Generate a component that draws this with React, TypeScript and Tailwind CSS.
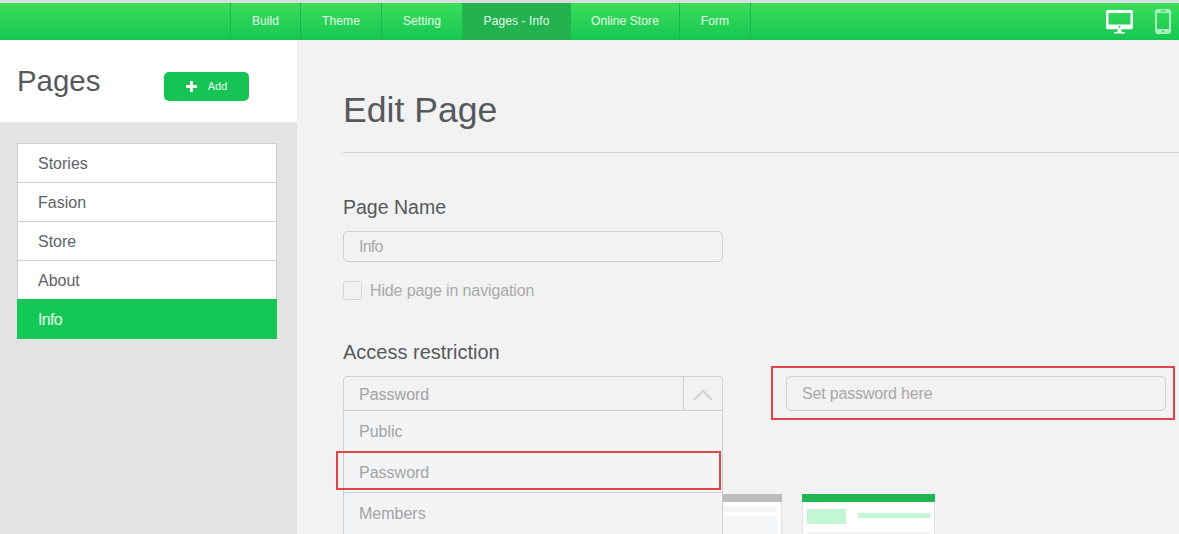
const navItems = [
  { label: "Build", w: "w-[70px]" },
  { label: "Theme", w: "w-[81px]" },
  { label: "Setting", w: "w-[81px]" },
  { label: "Pages - Info", w: "w-[108px]", active: true },
  { label: "Online Store", w: "w-[109px]" },
  { label: "Form", w: "w-[71px]" },
];

const pages = ["Stories", "Fasion", "Store"];

function Desktop() {
  return (
    <svg width="27" height="24" viewBox="0 0 28 25">
      <path fillRule="evenodd" fill="#fff" d="M1.5 0h25A1.5 1.5 0 0 1 28 1.5v17a1.5 1.5 0 0 1-1.5 1.5h-25A1.5 1.5 0 0 1 0 18.5v-17A1.5 1.5 0 0 1 1.5 0zM2.5 3v12h23V3z" />
      <circle cx="14" cy="17.5" r="1" fill="#1fc552" />
      <path fill="#fff" d="M12.5 20h3l1 3h3v1.5h-11V23h3z" />
    </svg>
  );
}

function Phone() {
  return (
    <svg width="16" height="25" viewBox="0 0 16 25">
      <path fillRule="evenodd" fill="#a6f2bb" d="M3 0h10a3 3 0 0 1 3 3v19a3 3 0 0 1-3 3H3a3 3 0 0 1-3-3V3a3 3 0 0 1 3-3zM2 4v16h12V4z" />
      <circle cx="8" cy="22.5" r="1" fill="#1fc552" />
      <rect x="5.5" y="1.5" width="5" height="1" fill="#1fc552" />
    </svg>
  );
}

export default function App() {
  return (
    <div className="h-[534px] w-[1179px] overflow-hidden bg-[#f2f2f2] font-['Liberation_Sans',Arial,sans-serif]">
      <div className="h-[3px] bg-[#dcdcdc]" />
      <header className="flex h-[37px] items-stretch bg-gradient-to-b from-[#38dd5a] to-[#14c752] pl-[230px]">
        <nav className="flex border-l border-[#1bb74a]">
          {navItems.map((n) => (
            <a
              key={n.label}
              className={`${n.w} flex items-center justify-center border-r border-[#1bb74a] pb-[2px] text-[12px] tracking-[0.1px] text-[#e6fbe9] ${n.active ? "bg-[#22b24f]" : ""}`}
            >
              {n.label}
            </a>
          ))}
        </nav>
        <div className="ml-auto flex items-center gap-[22px] pr-[8px]">
          <Desktop />
          <Phone />
        </div>
      </header>

      <div className="flex h-[494px]">
        <aside className="w-[297px] shrink-0 bg-[#e3e3e3]">
          <div className="flex h-[82px] bg-white pl-[17px]">
            <h2 className="mt-[23px] w-[147px] text-[29.4px] leading-[36px] text-[#55595c]">Pages</h2>
            <button className="mt-[32px] flex h-[29px] w-[85px] items-center justify-center gap-[11px] rounded-[5px] bg-[#15c455] text-[11px] text-[#e8fbee]">
              <svg width="11" height="11" viewBox="0 0 11 11">
                <path fill="#fff" d="M4 0h3v4h4v3H7v4H4V7H0V4h4z" />
              </svg>
              Add
            </button>
          </div>
          <ul className="ml-[17px] mt-[21px] w-[260px]">
            {pages.map((p, i) => (
              <li
                key={p}
                className={`flex h-[39px] items-center border-x border-b border-[#d0d0d0] bg-white pl-[20px] pt-[1px] text-[16px] text-[#5f6265] ${i === 0 ? "h-[40px] border-t" : ""}`}
              >
                {p}
              </li>
            ))}
            <li className="flex h-[38px] items-center border-x border-[#d0d0d0] bg-white pl-[20px] pt-[1px] text-[16px] text-[#5f6265]">
              About
            </li>
            <li className="flex h-[40px] items-center bg-[#14c855] pl-[21px] pt-[2px] text-[16px] tracking-[-0.7px] text-[#e8fbee]">Info</li>
          </ul>
        </aside>

        <main className="relative min-w-0 flex-1 pl-[46px]">
          <h1 className="pt-[47px] text-[35.6px] leading-[46px] text-[#55595c]">Edit Page</h1>
          <div className="mt-[19px] h-px bg-[#cfcfcf]" />

          <h3 className="mt-[42px] text-[19.5px] leading-[24px] text-[#55595c]">Page Name</h3>
          <div className="mt-[12px] flex h-[31px] w-[380px] items-center rounded-[5px] border border-[#cfcfcf] pl-[15px] text-[16px] tracking-[-0.8px] text-[#aaaaaa]">
            Info
          </div>
          <label className="mt-[18px] flex h-[20px] items-center gap-[8px] pt-[1px] text-[16px] tracking-[-0.13px] text-[#aaaaaa]">
            <span className="mt-[-1px] h-[19px] w-[19px] rounded-[3px] border border-[#d8d8d8]" />
            Hide page in navigation
          </label>

          <h3 className="mt-[40px] text-[20px] leading-[24px] text-[#55595c]">Access restriction</h3>

          <div className="mt-[12px] flex items-start gap-[63px]">
            <div className="relative z-10 w-[380px]">
              <div className="flex h-[35px] items-stretch rounded-t-[4px] border border-[#cfcfcf] bg-[#f2f2f2]">
                <span className="flex flex-1 items-center pl-[15px] pt-[2px] text-[16px] text-[#a3a3a3]">Password</span>
                <span className="flex w-[39px] items-center justify-center border-l border-[#cfcfcf] pt-[3px]">
                  <svg width="20" height="12" viewBox="0 0 20 12">
                    <path d="M1 11 10 2l9 9" fill="none" stroke="#d2d2d2" strokeWidth="2" />
                  </svg>
                </span>
              </div>
              <div className="border-x border-b border-[#cfcfcf] bg-[#f3f4f6] text-[16px] text-[#a3a3a3]">
                <div className="flex h-[41px] items-center pl-[15px]">Public</div>
                <div className="flex h-[41px] items-center border-b border-[#cfcfcf] pl-[15px] pt-[2px]">Password</div>
                <div className="flex h-[41px] items-center pl-[15px]">Members</div>
              </div>
              <div className="absolute left-[-7px] top-[75px] h-[39px] w-[385px] border-2 border-[#e0434a]" />
            </div>
            <div className="relative flex h-[35px] w-[380px] items-center rounded-[5px] border border-[#cfcfcf] pl-[15px] text-[16px] tracking-[-0.18px] text-[#a8a8a8]">
              Set password here
              <div className="absolute left-[-16px] top-[-11px] h-[54px] w-[404px] border-2 border-[#e0434a]" />
            </div>
          </div>

          <div className="absolute left-[352px] top-[454px] flex gap-[20px]">
            <div className="h-[60px] w-[133px] border-x border-[#e2e2e2] bg-white">
              <div className="-mx-px h-[8px] bg-[#bdbdbd]" />
              <div className="ml-[5px] mr-[4px] mt-[4px] h-[6px] bg-[#f4f5f7]" />
              <div className="ml-[5px] mr-[4px] mt-[4px] h-[30px] bg-[#f4f5f7]" />
            </div>
            <div className="h-[60px] w-[133px] border-x border-[#e2e2e2] bg-white">
              <div className="-mx-px h-[8px] bg-[#1fb650]" />
              <div className="mt-[7px] flex items-start px-[4px]">
                <div className="h-[15px] w-[39px] bg-[#c3f7d4]" />
                <div className="ml-[12px] mt-[4px] h-[5px] flex-1 bg-[#c3f7d4]" />
              </div>
              <div className="mx-[4px] mt-[8px] h-[2px] bg-[#f0f5f2]" />
            </div>
          </div>
        </main>
      </div>
    </div>
  );
}
